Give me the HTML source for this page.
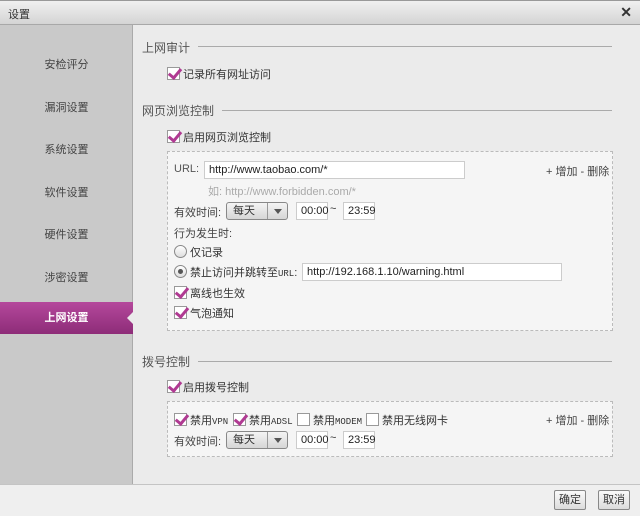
<!DOCTYPE html>
<html><head><meta charset="utf-8"><style>
*{margin:0;padding:0;box-sizing:border-box}
body{width:640px;height:516px;position:relative;overflow:hidden;background:#ebebeb;font-family:"Liberation Sans","Noto Sans CJK SC",sans-serif;font-size:11px;color:#333}
.a{position:absolute;white-space:nowrap}
#title{left:0;top:0;width:640px;height:25px;background:linear-gradient(#f0f0f0,#d4d4d4);border-bottom:1px solid #a8a8a8;border-top:1px solid #999}
#side{left:0;top:25px;width:133px;height:459px;background:#c9c9c9;border-right:1px solid #aaa}
.si{position:absolute;left:0;width:133px;text-align:center;color:#444;font-size:11px}
#sel{left:0;top:302px;width:133px;height:32px;background:linear-gradient(#b5489c,#8d2c78);color:#fff;text-align:center;line-height:32px;font-weight:bold;font-size:11px}
.h{font-size:12px;color:#555}
.line{height:1px;background:#aaa}
.cb{position:absolute;width:13px;height:13px;border:1px solid #999;background:#fff}
.cb.on::after{content:"";position:absolute;left:3px;top:-2px;width:5px;height:10px;border:solid #b03a92;border-width:0 3px 3px 0;transform:rotate(40deg)}
.box{border:1px dashed #bbb;background:#f5f5f5}
.in{position:absolute;height:18px;border:1px solid #ccc;background:#fff;padding-left:4px;line-height:16px;color:#222}
.sel{position:absolute;height:18px;border:1px solid #888;border-radius:3px;background:linear-gradient(#f4f4f4,#d6d6d6);line-height:16px;padding-left:6px}
.sel i{position:absolute;right:0;top:0;width:20px;height:16px;border-left:1px solid #999}
.sel i::after{content:"";position:absolute;left:6px;top:6px;border:4px solid transparent;border-top:5px solid #555}
.rd{position:absolute;width:13px;height:13px;border:1px solid #888;border-radius:50%;background:linear-gradient(#fff,#ddd)}
.btn{position:absolute;height:20px;border:1px solid #888;border-radius:2px;background:linear-gradient(#fafafa,#dcdcdc);text-align:center;line-height:18px}
.m{font-family:"Liberation Mono",monospace;font-size:9px}
</style></head><body>
<div class="a" id="title"><span class="a" style="left:8px;top:5px">设置</span><span class="a" style="right:8px;top:3px;font-size:14px;font-weight:bold;color:#333">✕</span></div>
<div class="a" id="side">
<div class="si" style="top:31px">安检评分</div>
<div class="si" style="top:74px">漏洞设置</div>
<div class="si" style="top:116px">系统设置</div>
<div class="si" style="top:159px">软件设置</div>
<div class="si" style="top:201px">硬件设置</div>
<div class="si" style="top:244px">涉密设置</div>
</div>
<div class="a" id="sel">上网设置</div>
<div class="a" style="left:127px;top:312px;border:6px solid transparent;border-right:6px solid #ebebeb;border-left:0"></div>

<span class="a h" style="left:142px;top:39px">上网审计</span><div class="a line" style="left:198px;top:46px;width:414px"></div>
<div class="cb on" style="left:167px;top:67px"></div><span class="a" style="left:183px;top:66px">记录所有网址访问</span>

<span class="a h" style="left:142px;top:102px">网页浏览控制</span><div class="a line" style="left:222px;top:110px;width:390px"></div>
<div class="cb on" style="left:167px;top:130px"></div><span class="a" style="left:183px;top:129px">启用网页浏览控制</span>

<div class="a box" style="left:167px;top:151px;width:446px;height:180px"></div>
<span class="a" style="left:174px;top:163px;color:#555">URL:</span>
<div class="in" style="left:204px;top:161px;width:261px">http://www.taobao.com/*</div>
<span class="a" style="left:546px;top:163px;color:#444">+ 增加 - 删除</span>
<span class="a" style="left:208px;top:183px;color:#aaa">如: http://www.forbidden.com/*</span>
<span class="a" style="left:174px;top:204px;color:#444">有效时间:</span>
<div class="sel" style="left:226px;top:202px;width:62px">每天<i></i></div>
<div class="in" style="left:296px;top:202px;width:32px">00:00</div><span class="a" style="left:330px;top:203px">~</span>
<div class="in" style="left:343px;top:202px;width:32px">23:59</div>
<span class="a" style="left:174px;top:225px;color:#444">行为发生时:</span>
<div class="rd" style="left:174px;top:245px"></div><span class="a" style="left:190px;top:244px">仅记录</span>
<div class="rd" style="left:174px;top:265px"><div style="position:absolute;left:3px;top:3px;width:5px;height:5px;border-radius:50%;background:#555"></div></div>
<span class="a" style="left:190px;top:264px">禁止访问并跳转至<span class="m">URL</span>:</span>
<div class="in" style="left:302px;top:263px;width:260px">http://192.168.1.10/warning.html</div>
<div class="cb on" style="left:174px;top:286px"></div><span class="a" style="left:190px;top:285px">离线也生效</span>
<div class="cb on" style="left:174px;top:306px"></div><span class="a" style="left:190px;top:305px">气泡通知</span>

<span class="a h" style="left:142px;top:353px">拨号控制</span><div class="a line" style="left:198px;top:361px;width:414px"></div>
<div class="cb on" style="left:167px;top:380px"></div><span class="a" style="left:183px;top:379px">启用拨号控制</span>
<div class="a box" style="left:167px;top:401px;width:446px;height:56px"></div>
<div class="cb on" style="left:174px;top:413px"></div><span class="a" style="left:190px;top:412px">禁用<span class="m">VPN</span></span>
<div class="cb on" style="left:233px;top:413px"></div><span class="a" style="left:249px;top:412px">禁用<span class="m">ADSL</span></span>
<div class="cb" style="left:297px;top:413px"></div><span class="a" style="left:313px;top:412px">禁用<span class="m">MODEM</span></span>
<div class="cb" style="left:366px;top:413px"></div><span class="a" style="left:382px;top:412px">禁用无线网卡</span>
<span class="a" style="left:546px;top:412px;color:#444">+ 增加 - 删除</span>
<span class="a" style="left:174px;top:433px;color:#444">有效时间:</span>
<div class="sel" style="left:226px;top:431px;width:62px">每天<i></i></div>
<div class="in" style="left:296px;top:431px;width:32px">00:00</div><span class="a" style="left:330px;top:432px">~</span>
<div class="in" style="left:343px;top:431px;width:32px">23:59</div>

<div class="a" style="left:0;top:484px;width:640px;height:32px;background:#efefef;border-top:1px solid #c4c4c4"></div>
<div class="btn" style="left:554px;top:490px;width:32px">确定</div>
<div class="btn" style="left:598px;top:490px;width:32px">取消</div>
</body></html>
